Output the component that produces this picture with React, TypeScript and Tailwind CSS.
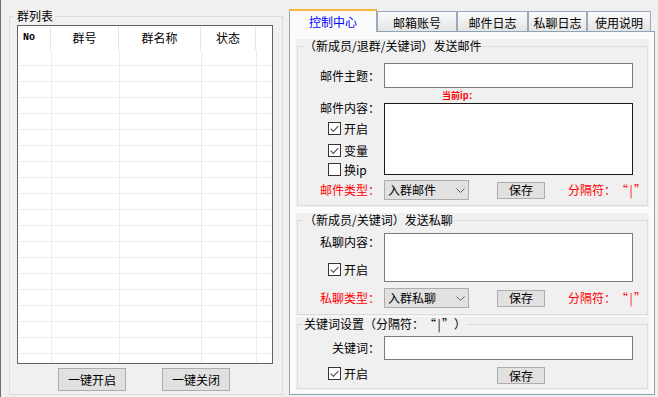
import React from 'react';

const headCols = ['w-[33px] pl-[5px] text-left', 'w-[68px] text-center', 'w-[82px] text-center', 'w-[55px] text-center'];
const bodyCols = ['w-[34px]', 'w-[68px]', 'w-[82px]', 'w-[55px]'];

// 全角引号包住的分隔符
function Bar() {
  return (
    <>
      <span className="inline-block w-[12px] text-center">“</span>
      <span className="inline-block w-[6px] text-center">|</span>
      <span className="inline-block w-[12px] text-center">”</span>
    </>
  );
}

function CheckBox({ checked, label }: { checked: boolean; label: string }) {
  return (
    <div className="flex items-center h-[13px]">
      <span className="w-[13px] h-[13px] border border-[#333333] bg-white flex items-center justify-center shrink-0">
        {checked && (
          <svg width="9" height="8" viewBox="0 0 9 8">
            <path d="M0.7 3.6 L3.3 6.3 L8.3 1.1" fill="none" stroke="#555555" strokeWidth="1.2" />
          </svg>
        )}
      </span>
      <span className="ml-[3px] leading-[13px]">{label}</span>
    </div>
  );
}

function Combo({ value }: { value: string }) {
  return (
    <div className="ml-[4px] w-[85px] h-[20px] bg-[#e1e1e1] border border-[#adadad] flex items-center justify-between pl-[3px] pr-[3px]">
      <span>{value}</span>
      <svg width="9" height="5" viewBox="0 0 9 5">
        <path d="M0.5 0.5 L4.5 4.5 L8.5 0.5" fill="none" stroke="#606060" strokeWidth="1" />
      </svg>
    </div>
  );
}

function SaveButton({ className = '' }: { className?: string }) {
  return (
    <button className={`w-[48px] h-[17px] bg-[#e1e1e1] border border-[#adadad] flex items-center justify-center leading-[12px] ${className}`}>
      保存
    </button>
  );
}

function Group({ title, height, children }: { title: React.ReactNode; height: string; children: React.ReactNode }) {
  return (
    <div className="bg-[#f0f0f0] px-[1px] pb-[1px] w-[353px]">
      <fieldset className={`border border-[#dcdcdc] ${height}`}>
        <legend className="ml-[5px] px-[1px] leading-[14px]">{title}</legend>
        {children}
      </fieldset>
    </div>
  );
}

export default function App() {
  return (
    <div className="w-[658px] h-[397px] bg-[#f0f0f0] flex font-['Noto_Sans_CJK_SC','Noto_Sans',sans-serif] text-[12px] leading-[14px] text-black overflow-hidden">
      <div className="w-[1px] h-full bg-[#707070]" />

      {/* 群列表 */}
      <fieldset className="ml-[8px] mt-[9px] w-[274px] h-[386px] border border-[#dcdcdc]">
        <legend className="ml-[3px] pl-[4px] pr-[2px] leading-[14px]">群列表</legend>
        <div className="ml-[7px] mt-[2px] w-[256px] h-[339px] border border-[#646464] bg-white overflow-hidden">
          <div className="flex h-[24px]">
            {headCols.map((c, i) => (
              <div key={i} className={`${c} h-full border-r border-[#e5e5e5] flex items-center ${i === 0 ? '' : 'justify-center'}`}>
                {i === 0 ? <span className="font-['Liberation_Mono',monospace] text-[10px] font-bold">No</span> : ['', '群号', '群名称', '状态'][i]}
              </div>
            ))}
            <div className="flex-1" />
          </div>
          {Array.from({ length: 20 }).map((_, r) => (
            <div key={r} className="flex h-[16px] border-b border-[#ededed]">
              {bodyCols.map((c, i) => (
                <div key={i} className={`${c} h-full border-r border-[#ededed]`} />
              ))}
              <div className="flex-1" />
            </div>
          ))}
        </div>
        <div className="flex mt-[4px] pl-[48px] gap-[36px]">
          <button className="w-[68px] h-[23px] bg-[#e1e1e1] border border-[#adadad] flex items-center justify-center">一键开启</button>
          <button className="w-[68px] h-[23px] bg-[#e1e1e1] border border-[#adadad] flex items-center justify-center">一键关闭</button>
        </div>
      </fieldset>

      {/* 标签页 */}
      <div className="ml-[6px] mt-[9px] w-[366px] flex flex-col">
        <div className="flex items-end h-[22px]">
          <div className="relative z-10 -mb-px w-[88px] h-[23px] bg-[#fbfbfb] border-x border-[#9aaab9] border-t-2 border-t-[#f9b640] flex items-center justify-center pt-[1px] text-[#0000ff]">
            控制中心
          </div>
          <div className="w-[80px] h-[20px] border-t border-x border-[#9aaab9] bg-linear-to-b from-[#fbfbfb] to-[#e4e4e4] flex items-center justify-center pt-[2px]">邮箱账号</div>
          <div className="w-[71px] h-[20px] border-t border-x border-[#9aaab9] bg-linear-to-b from-[#fbfbfb] to-[#e4e4e4] flex items-center justify-center pt-[2px]">邮件日志</div>
          <div className="w-[59px] h-[20px] border-t border-x border-[#9aaab9] bg-linear-to-b from-[#fbfbfb] to-[#e4e4e4] flex items-center justify-center pt-[2px]">私聊日志</div>
          <div className="w-[64px] h-[20px] border-t border-x border-[#9aaab9] bg-linear-to-b from-[#fbfbfb] to-[#e4e4e4] flex items-center justify-center pt-[2px]">使用说明</div>
        </div>

        <div className="w-[366px] h-[364px] border border-[#8fa3b5] bg-[#fbfbfb] pl-[6px] pt-[7px]">
          {/* 邮件 */}
          <Group title="（新成员/退群/关键词）发送邮件" height="h-[167px]">
            <div className="flex items-center mt-[10px] h-[25px]">
              <div className="w-[82px] text-right">邮件主题：</div>
              <div className="ml-[4px] w-[249px] h-[25px] bg-white border border-[#7a7a7a]" />
            </div>
            <div className="h-[15px] flex items-center pl-[144px] text-[9px] font-bold text-[#ff0000] leading-[10px]">当前ip：</div>
            <div className="flex h-[72px]">
              <div className="w-[82px]">
                <div className="text-right leading-[12px] -mt-[1px]">邮件内容：</div>
                <div className="pl-[30px] mt-[8px]"><CheckBox checked label="开启" /></div>
                <div className="pl-[30px] mt-[9px]"><CheckBox checked label="变量" /></div>
                <div className="pl-[30px] mt-[6px]"><CheckBox checked={false} label="换ip" /></div>
              </div>
              <div className="ml-[4px] w-[249px] h-[72px] bg-white border border-[#1a1a1a]" />
            </div>
            <div className="flex items-center mt-[5px] h-[20px]">
              <div className="w-[82px] text-right text-[#ff0000]">邮件类型：</div>
              <Combo value="入群邮件" />
              <SaveButton className="ml-[28px]" />
              <div className="ml-[23px] text-[#ff0000] whitespace-nowrap">分隔符：<Bar /></div>
            </div>
          </Group>

          {/* 私聊 */}
          <div className="mt-[6px]">
            <Group title="（新成员/关键词）发送私聊" height="h-[102px]">
              <div className="flex mt-[6px] h-[49px]">
                <div className="w-[82px]">
                  <div className="text-right leading-[12px] mt-[3px]">私聊内容：</div>
                  <div className="pl-[30px] mt-[15px]"><CheckBox checked label="开启" /></div>
                </div>
                <div className="ml-[4px] w-[249px] h-[49px] bg-white border border-[#7a7a7a]" />
              </div>
              <div className="flex items-center mt-[6px] h-[20px]">
                <div className="w-[82px] text-right text-[#ff0000]">私聊类型：</div>
                <Combo value="入群私聊" />
                <SaveButton className="ml-[28px]" />
                <div className="ml-[23px] text-[#ff0000] whitespace-nowrap">分隔符：<Bar /></div>
              </div>
            </Group>
          </div>

          {/* 关键词 */}
          <div className="mt-[1px]">
            <Group title={<>关键词设置（分隔符：<Bar />）</>} height="h-[72px]">
              <div className="flex items-center mt-[5px] h-[24px]">
                <div className="w-[82px] text-right">关键词：</div>
                <div className="ml-[4px] w-[249px] h-[24px] bg-white border border-[#7a7a7a]" />
              </div>
              <div className="flex items-start mt-[7px]">
                <div className="w-[199px] pl-[30px]"><CheckBox checked label="开启" /></div>
                <SaveButton />
              </div>
            </Group>
          </div>
        </div>
      </div>
    </div>
  );
}
